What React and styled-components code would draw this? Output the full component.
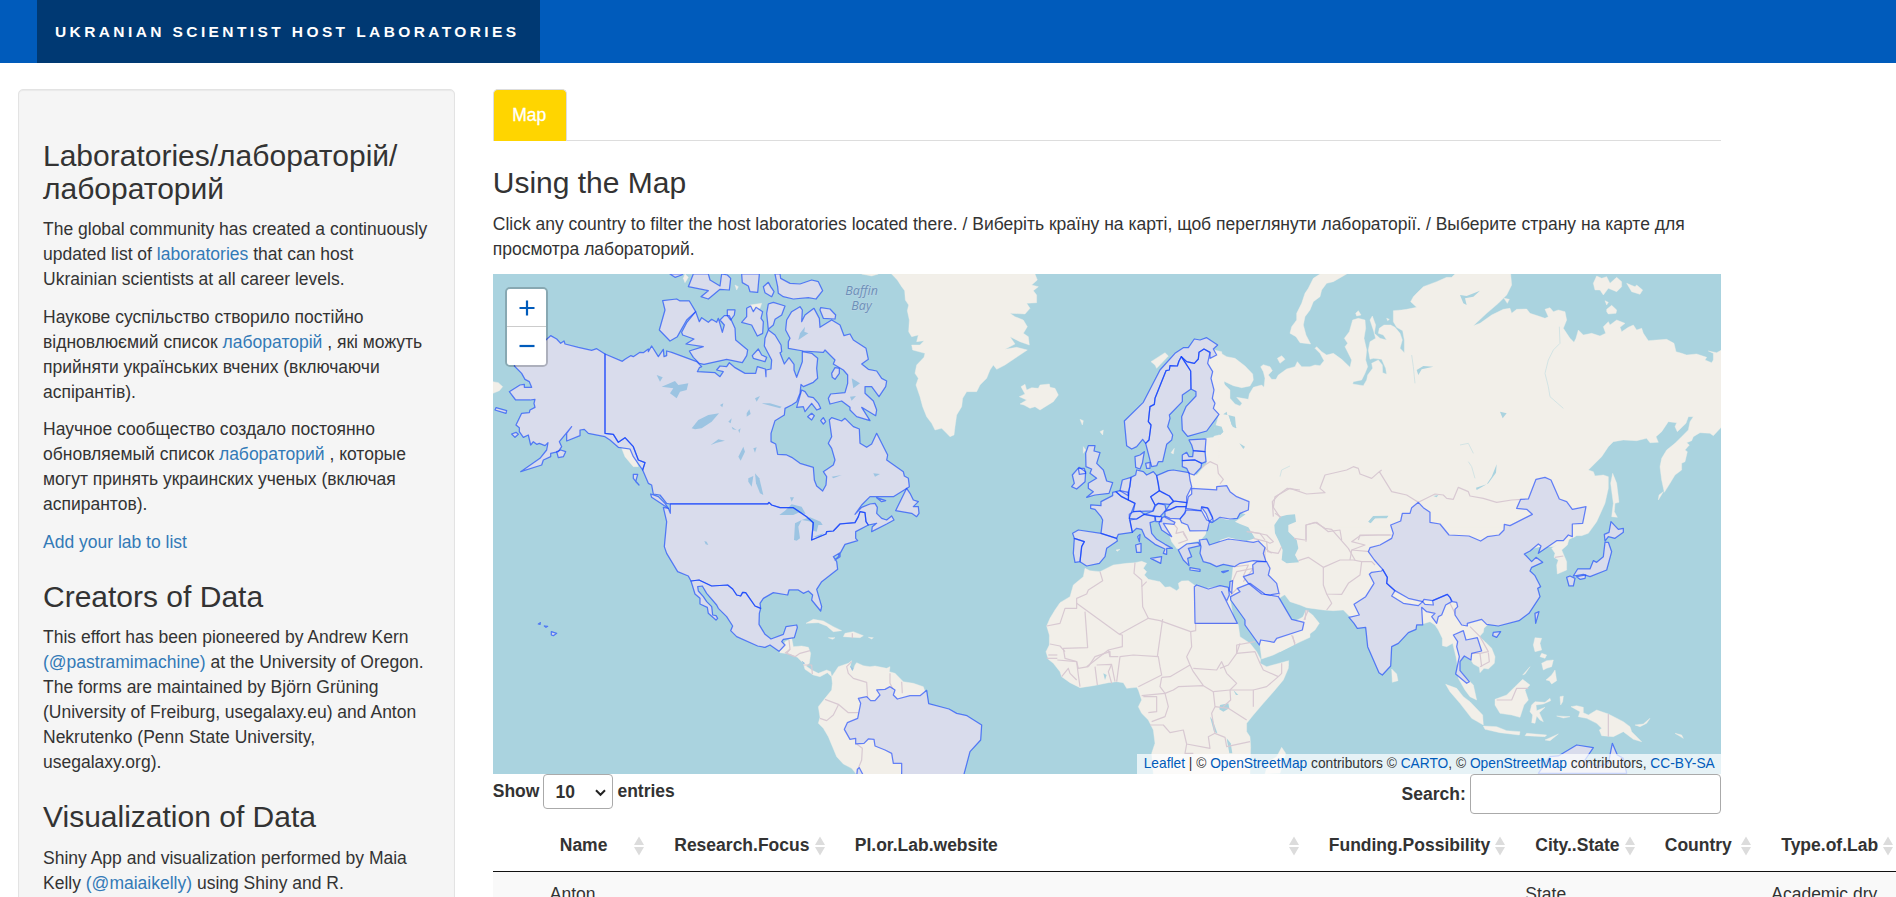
import React from "react";
import styled, { createGlobalStyle } from "styled-components";

const GlobalStyle = createGlobalStyle`
  *, *::before, *::after { box-sizing: border-box; }
  html, body { margin: 0; height: 897px; overflow: hidden; background: #fff; }
  body {
    font-family: "Liberation Sans", Arial, sans-serif;
    font-size: 17.5px;
    line-height: 25px;
    color: #333;
  }
`;

const Page = styled.div`
  width: 1896px;
  height: 897px;
  overflow: hidden;
`;
const Navbar = styled.header`
  display: flex;
  height: 63px;
  padding-left: 37px;
  margin-bottom: 26px;
  background: #005bbb;
`;
const Brand = styled.div`
  width: 503px;
  padding-left: 18px;
  background: #003973;
  color: #fff;
  font-size: 15.5px;
  font-weight: bold;
  letter-spacing: 3.4px;
  line-height: 63px;
  white-space: nowrap;
`;
const Layout = styled.div`
  display: flex;
  align-items: flex-start;
  padding-left: 18px;
`;
const Sidebar = styled.aside`
  flex: none;
  width: 437px;
  height: 900px;
  margin-right: 37.75px;
  padding: 23.75px 24px;
  background: #f5f5f5;
  border: 1px solid #e3e3e3;
  border-radius: 5px;
  box-shadow: inset 0 1px 1px rgba(0, 0, 0, 0.05);
`;
const Main = styled.main`
  flex: none;
  width: 1228px;
`;
const Heading = styled.h3`
  margin: 25px 0 12.5px;
  font-size: 30px;
  font-weight: 400;
  line-height: 33px;
`;
const Text = styled.p`
  margin: 0 0 12.5px;
`;
const Link = styled.a`
  color: #337ab7;
`;
const Tabs = styled.nav`
  display: flex;
  height: 52px;
  border-bottom: 1px solid #ddd;
`;
const Tab = styled.div`
  width: 74px;
  height: 52px;
  padding-right: 1px;
  border: 1px solid #ddd;
  border-bottom: 0;
  border-radius: 5px 5px 0 0;
  background: #ffd500;
  color: #fff;
  -webkit-text-stroke: 0.3px #fff;
  line-height: 50px;
  text-align: center;
`;
const MapFrame = styled.div`
  position: relative;
  height: 500px;
  background: #aad3df;
  overflow: hidden;
  svg { display: block; }
`;
const ZoomControl = styled.div`
  position: absolute;
  left: 12.5px;
  top: 13px;
  width: 42.5px;
  height: 80px;
  border: 2.5px solid rgba(0, 0, 0, 0.2);
  border-radius: 5px;
  background-clip: padding-box;
`;
const ZoomButton = styled.div`
  display: flex;
  align-items: center;
  justify-content: center;
  height: 38px;
  background: #fff;
  border-radius: ${(p) => (p.$last ? "0 0 3px 3px" : "3px 3px 0 0")};
  border-bottom: ${(p) => (p.$last ? "0" : "1px solid #ccc")};
`;
const Attribution = styled.div`
  position: absolute;
  right: 0;
  bottom: 0;
  width: 584px;
  height: 20px;
  padding-right: 6px;
  background: rgba(255, 255, 255, 0.7);
  font-size: 13.75px;
  line-height: 19px;
  text-align: right;
  white-space: nowrap;
`;
const MapLink = styled.a`
  color: #005bbb;
`;
const Controls = styled.div`
  display: flex;
  justify-content: space-between;
  align-items: flex-start;
  height: 49px;
  font-weight: bold;
`;
const Control = styled.label`
  display: flex;
  align-items: center;
  height: ${(p) => p.$height}px;
  gap: 4px;
`;
const Select = styled.div`
  display: flex;
  align-items: center;
  justify-content: space-between;
  width: 70px;
  height: 35px;
  padding: 2px 6px 0 11px;
  border: 1px solid #aaa;
  border-radius: 4px;
`;
const SearchInput = styled.div`
  width: 251px;
  height: 40px;
  border: 1px solid #aaa;
  border-radius: 4px;
`;
const Row = styled.div`
  display: grid;
  grid-template-columns: 47.5px 114.5px 180.5px 474px 206.5px 129.5px 116.5px 142px;
  width: 1411px;
`;
const HeadRow = styled(Row)`
  height: 49px;
  border-bottom: 1px solid #111;
  font-weight: bold;
`;
const BodyRow = styled(Row)`
  height: 60px;
  padding-top: 10px;
  background: #f9f9f9;
`;
const HeadCell = styled.div`
  display: flex;
  justify-content: space-between;
  align-items: center;
  height: 45px;
  padding: 0 10.5px 0 19.5px;
  white-space: nowrap;
`;
const Cell = styled.div`
  padding-left: 9.5px;
`;

const Sort = () => (
  <svg width="10" height="20" viewBox="0 0 10 20" fill="#dcdcdc">
    <path d="M5 0.5 L10 9 H0 Z M0 11 H10 L5 19.5 Z" />
  </svg>
);

/* Map geometry. Every region has its own origin and is drawn at three units per pixel. */
const AMERICA = [490, 270];
const SOUTH = [490, 490];
const EUROPE = [1040, 320];
const AFRICA = [1020, 540];
const RUSSIA = [1220, 270];
const ASIA = [1280, 470];

const land = [
  [AMERICA, [
    "1205,12 1222,30 1235,50 1244,62 1246,90 1256,105 1252,122 1258,150 1256,185 1265,200 1285,195 1280,215 1302,212 1290,225 1265,225 1268,240 1305,250 1302,262 1280,285 1275,310 1285,325 1278,345 1290,380 1298,410 1310,440 1325,460 1335,480 1355,475 1370,490 1380,500 1392,495 1395,470 1400,435 1415,410 1418,385 1430,365 1460,365 1470,345 1490,325 1500,300 1510,285 1520,298 1545,285 1612,240 1580,232 1545,238 1575,222 1560,200 1590,215 1618,225 1615,200 1600,190 1612,170 1600,150 1575,140 1560,130 1605,132 1620,115 1610,100 1640,98 1640,75 1630,62 1645,50 1625,45 1642,30 1635,12",
    "9,335 25,338 38,350 28,362 9,370", "1115,12 1145,18 1165,12", "585,12 595,22 585,38 580,25", "735,45 745,50 740,60",
    "395,535 425,540 445,590 430,590 405,560", "780,105 815,100 810,115 785,120",
  ]],
  [SOUTH, [
    "868,485 880,470 885,455 905,445 910,470 935,468 955,472 962,490 958,520 948,528 965,540 985,550 1010,540 1022,545 1025,560 1012,548 990,560 970,555 945,538 940,520 922,502 900,492 870,488",
    "1025,560 1045,530 1075,520 1085,512 1080,530 1090,540 1095,525 1100,518 1120,527 1140,530 1155,528 1190,535 1200,530 1198,545 1215,550 1240,575 1270,580 1300,590 1310,620 1230,860 1105,860 1085,835 1060,822 1040,800 1015,740 1000,715 985,700 990,682 985,650 1005,625 1025,600 1027,580",
    "948,400 970,388 1000,393 1030,410 1055,422 1030,425 1010,408 985,398", "1065,430 1090,425 1120,437 1110,443 1060,440", "1015,443 1035,443 1028,448", "1135,442 1150,443 1145,447",
  ]],
  [EUROPE, [
    "-57,200 -45,193 -40,210 -25,203 -5,205 0,195 28,192 30,202 45,205 55,225 40,245 0,270 -15,260 -30,265 -48,255 -60,252 -40,240 -62,230 -45,222",
    "500,85 545,95 570,400 570,600 500,640 480,662 440,670 425,690 410,685 405,655 365,615 380,590 445,500 445,452 470,465 500,430 495,355 560,340 525,325 537,283 520,265 525,250 517,235 522,210 513,175 518,155 503,130",
    "560,640 600,605 640,640 720,660 700,735 585,745 580,700 660,700 655,663 640,655", "137,390 130,400 130,380", "333,125 375,98 385,108 350,145 345,135", "120,298 130,302 127,315",
    "180,335 190,330 188,345", "393,398 403,385 400,402", "228,690 240,688 232,694", "380,620 410,650 410,685 395,665",
  ]],
  [AFRICA, [
    "195,85 210,92 240,95 280,75 320,70 345,68 365,64 380,70 370,85 380,95 373,105 385,118 420,125 435,142 450,140 470,152 478,145 475,130 485,123 505,122 527,138 560,145 600,138 622,145 630,175 640,230 655,255 660,290 690,310 710,335 722,358 720,370 740,380 770,372 806,362 805,385 790,420 765,450 730,490 700,525 680,550 680,575 690,590 692,620 690,702 400,702 395,640 405,610 400,570 385,540 365,520 355,500 365,480 355,450 350,442 320,445 310,428 290,425 265,428 220,437 180,443 150,428 125,410 120,395 100,370 85,358 78,335 88,315 88,285 80,258 90,235 105,210 120,188 150,170 160,135 190,110",
    "640,75 650,65 800,65 800,160 770,180 650,185 628,165 635,120", "718,300 870,220 870,292 820,315 760,345 725,357",
    "785,622 797,640 780,700 735,702 745,665 770,650",
  ]],
  [RUSSIA, [
    "-5,245 20,260 45,265 75,288 98,312 100,330 90,348 65,353 40,347 15,335 -5,325 15,345 30,360 30,385 45,402 60,408 66,400 50,382 85,388 88,372 100,352 125,345 132,352 135,325 130,305 122,290 130,284 150,290 157,302 145,315 155,328 168,328 175,315 200,297 225,290 232,275 245,290 270,290 285,285 300,287 312,272 300,250 285,235 290,230 305,245 320,255 340,250 365,268 390,292 395,270 375,230 383,220 373,205 388,185 398,150 415,145 435,150 437,175 432,205 440,240 437,270 443,290 435,310 425,330 400,335 398,342 430,347 440,330 443,315 458,295 455,280 475,270 487,285 488,308 500,313 497,295 485,268 460,265 450,268 445,240 450,215 467,205 460,180 450,150 457,138 467,165 463,190 480,205 500,210 490,195 475,190 478,175 492,165 512,165 525,172 540,190 547,210 540,235 553,248 553,210 548,182 530,172 520,155 520,122 545,120 560,118 590,112 572,95 580,80 590,70 610,50 650,35 680,22 695,22 705,12 872,12 875,45 860,75 835,100 800,130 760,167 780,160 815,135 850,118 870,115 875,130 890,118 920,117 930,130 955,138 975,145 985,140 975,118 990,113 1000,125 1015,120 1035,125 1040,150 1030,175 1050,205 1062,217 1068,205 1075,180 1090,195 1115,190 1140,198 1157,190 1150,170 1165,155 1170,165 1190,150 1215,160 1200,172 1205,185 1225,172 1240,165 1250,180 1265,175 1270,190 1285,212 1310,210 1340,208 1362,220 1368,245 1385,250 1400,255 1430,252 1460,262 1455,270 1475,278 1480,270 1480,250 1465,243 1490,248 1505,240 1505,470 1480,497 1470,490 1440,488 1420,500 1415,512 1400,518 1408,525 1395,540 1402,545 1395,575 1385,580 1385,600 1365,615 1350,640 1333,667 1325,630 1320,590 1325,565 1340,540 1365,520 1385,500 1405,480 1410,455 1420,440 1405,440 1398,460 1372,485 1365,470 1370,458 1345,455 1325,485 1308,500 1315,517 1290,518 1280,505 1250,512 1210,510 1180,515 1165,530 1145,560 1105,600 1120,605 1125,618 1150,615 1165,620 1165,655 1155,700 1130,755 1105,790 1085,797 1070,797 1000,830 0,830",
    "380,12 340,35 320,40 305,60 300,80 280,95 270,120 255,140 250,165 258,195 272,222 240,218 228,200 210,190 215,170 230,150 230,130 245,100 255,70 265,55 280,25 300,12",
    "1178,610 1190,640 1197,697 1185,700 1183,725 1192,742 1175,740 1180,700 1172,640", "1125,60 1120,40 1130,18 1145,25 1160,20 1170,40 1190,22 1205,35 1205,50 1190,65 1165,55 1150,75 1140,60",
    "1220,40 1245,50 1250,45 1268,60 1260,73 1235,65", "1160,118 1175,106 1190,120 1188,130 1165,132 1160,125", "1155,92 1165,97 1160,105", "407,130 415,122 423,135 410,138", "172,265 185,257 195,268 180,280", "500,145 508,148 503,152", "852,85 868,88 862,100",
    "1317,675 1330,665 1315,690",
  ]],
  [ASIA, [
    "-135,170 880,170 885,200 850,212 700,250 740,300 740,400 655,465 625,462 612,475 610,487 598,500 615,515 635,535 645,560 643,580 625,597 612,595 600,608 598,592 580,582 573,570 553,558 540,575 540,602 570,635 580,645 590,690 570,680 555,660 535,625 533,590 528,560 518,520 500,530 487,527 487,505 475,480 465,465 450,455 425,463 385,440 210,440 190,420 160,422 130,420 80,413 60,405 30,395 15,375 -5,362 -20,360 -140,360",
    "890,150 905,170 890,195 870,193", "815,235 840,218 868,205 862,225 845,240 860,275 860,300 832,312 830,285 835,270 822,262 825,250",
    "335,597 350,612 354,632 337,637", "765,503 785,505 780,520 785,540 765,545 760,525", "780,560 785,550 800,555 795,565", "785,580 800,572 820,570 815,590 800,595 790,600", "798,630 815,615 825,600 830,632 815,642 808,632",
    "497,643 530,655 550,680 570,695 608,735 610,765 575,745 540,700 510,665", "610,768 650,770 680,782 720,785 718,795 660,788 615,778", "740,790 800,795 795,800 735,797", "795,810 835,792 810,812",
    "645,688 680,675 705,650 728,628 750,645 735,660 745,690 732,705 720,742 695,735 660,730 645,705", "755,705 765,695 795,697 810,685 812,692 790,702 768,705 770,722 795,712 778,728 790,755 780,750 770,738 765,760 755,758 758,735 750,725",
    "873,710 890,707 910,712 910,728 925,735 950,720 985,732 1030,755 1050,770 1055,785 1085,815 1060,808 1030,785 1000,800 965,797 958,780 965,775 950,760 920,745 895,740 900,725", "1065,765 1090,762 1110,745 1100,760 1080,770",
    "840,680 850,678 848,695 842,705", "830,738 870,740 850,744", "728,615 750,590 735,612", "78,420 98,435 118,460 105,480 85,495 40,525 0,545 -10,500 40,460 65,450", "0,585 20,575 25,585 0,640", "1185,790 1205,795 1210,805",
  ]],
];

const selected = [
  [AMERICA, [
    "345,252 397,274 405,268 422,257 430,260 450,247 460,248 475,237 475,245 485,228 505,260 520,238 522,260 530,257 530,243 545,247 620,275 635,290 628,293 622,305 675,308 690,320 700,305 680,300 690,288 710,290 718,278 735,293 765,310 797,310 802,290 826,297 828,320 828,300 843,297 845,270 823,228 825,205 835,180 855,195 873,225 875,245 870,248 883,282 897,263 912,283 912,300 920,322 937,275 937,245 965,250 983,265 980,295 983,325 970,337 940,350 933,343 930,370 920,395 905,405 885,415 883,435 855,452 843,490 843,515 857,522 863,553 890,555 905,562 930,580 970,592 973,630 980,648 998,663 1008,645 1010,620 1000,605 1030,585 1035,570 1025,535 1015,520 1025,500 1018,450 1025,443 1055,453 1065,445 1090,470 1108,477 1110,520 1130,532 1145,522 1160,490 1193,555 1190,570 1240,605 1243,618 1255,625 1258,650 1210,680 1140,680 1115,705 1095,733 1115,712 1140,702 1155,700 1162,712 1160,730 1175,745 1190,750 1205,738 1212,750 1190,762 1145,785 1147,770 1160,760 1135,765 1128,755 1125,728 1110,725 1105,740 1095,758 1050,762 1030,783 1010,785 1008,792 965,810 970,758 950,740 910,713 870,713 845,705 837,697 833,702 541,702 530,700 510,675 490,672 485,645 475,640 458,600 465,578 445,570 430,530 405,503 385,517 370,493 345,490",
    "345,252 320,236 305,241 265,232 225,222 222,213 212,220 200,207 182,197 165,212 130,240 80,270 73,288 95,310 105,328 118,335 125,352 103,352 103,343 90,345 58,365 77,390 120,390 135,388 132,400 135,412 120,420 118,428 95,430 78,465 88,473 88,485 100,502 115,495 122,525 130,515 140,523 148,520 165,527 174,518 170,540 150,565 135,575 92,605 155,585 160,570 182,560 182,550 205,545 215,530 208,515 245,470 230,490 230,513 270,497 270,480 283,478 295,490 345,500 360,510 385,532 420,537 430,560 458,600 465,578 445,570 430,530 405,503 385,517 370,493 345,490",
    "518,92 560,87 570,93 598,93 617,125 590,150 572,182 562,200 540,213 508,180 525,120", "617,125 628,155 635,143 655,157 665,148 680,157 685,145 697,187 703,165 690,150 703,137 718,137 735,175 737,210 773,240 770,257 757,278 710,268 642,283 628,280 610,262 598,243 640,230 588,222 612,207 578,195 575,187 590,158", "712,120 735,120 733,135 722,150 712,137",
    "770,115 782,108 790,125 798,112 818,125 813,145 820,155 818,190 802,198 785,165 755,157 770,140", "835,102 850,97 885,108 875,135 855,148 850,165 835,178 830,130", "787,257 805,237 815,255 830,262 825,275 790,265",
    "595,50 610,12 655,12 660,30 690,48 695,12 712,15 722,25 718,60 690,58 655,87 633,80 655,62", "755,12 808,12 803,67 780,65 775,48 757,38", "820,50 835,37 842,50 852,65 845,80 825,68", "855,12 863,50 865,70 880,80 910,87 955,83 978,87 998,62 985,35 965,30 930,42 900,40 872,25 870,12", "540,12 555,22 575,15 578,12",
    "895,235 895,215 900,205 887,180 890,150 905,125 930,110 937,120 935,155 945,135 972,115 988,145 990,172 1025,150 1050,165 1062,197 1080,192 1090,210 1128,235 1135,268 1115,282 1135,298 1160,303 1175,325 1190,333 1187,350 1167,380 1145,350 1125,350 1125,370 1150,393 1160,420 1157,437 1115,412 1140,452 1100,440 1080,420 1080,412 1055,393 1020,402 1015,385 1022,372 1065,368 1073,340 1073,315 1060,300 1030,282 1035,270 1005,240 1000,247 940,243",
    "990,120 992,113 1020,117 1037,135 1035,147 1000,145", "935,360 945,365 955,380 970,383 985,400 992,415 980,420 965,400 945,425 940,410 920,412", "1025,310 1035,293 1048,295 1048,310 1035,328 1027,322", "953,440 965,430 973,437 965,450", "992,452 1000,443 1007,455 1000,462",
    "1250,655 1260,670 1270,690 1285,695 1270,710 1285,710 1287,730 1280,740 1265,730 1217,722", "482,672 505,680 525,700 535,715 485,682", "430,613 443,613 437,635 447,645 430,625", "1160,683 1187,692 1175,695", "200,545 212,540 227,545 220,560 205,563", "15,420 18,413 50,422 48,430", "65,492 78,487 85,493 75,502",
  ]],
  [SOUTH, [
    "541,42 541,70 535,55 520,52 530,95 523,170 530,190 563,245 595,258 603,273 627,270 665,288 713,285 728,297 740,315 752,318 758,307 767,308 795,348 812,355 810,340 820,325 850,308 893,315 897,300 925,300 940,310 955,303 968,315 965,330 992,363 995,350 980,298 995,275 1043,238 1040,215 1030,200 1050,188 1050,200 1035,210 1045,200 1065,163 1103,152 1097,145 1097,125 1135,105 1128,95 1125,68 1110,65 1105,80 1095,98 1050,102 1030,123 1010,125 1008,132 965,150 970,98 950,80 910,53 870,53 845,45 837,37 833,42",
    "603,273 627,270 665,288 713,285 728,297 740,315 752,318 758,307 767,308 795,348 812,355 808,370 807,403 825,433 843,447 880,433 888,410 920,405 922,412 913,443 880,448 875,455 885,465 867,484 840,465 825,472 803,468 740,440 722,422 728,408 710,380 685,355 680,345 650,310 637,288 623,290 625,303 640,320 650,335 665,350 668,375 678,377 683,385 678,390 655,370 652,352 630,342 630,325 615,312",
    "1310,601 1316,641 1377,657 1400,670 1431,677 1475,705 1472,750 1440,785 1420,860 1235,860 1235,820 1210,820 1205,790 1185,780 1155,768 1152,748 1135,747 1122,760 1097,762 1097,745 1080,748 1063,718 1072,698 1103,685 1112,640 1105,625 1130,620 1142,632 1155,632 1170,615 1160,600 1185,598 1200,590 1215,600 1210,615 1222,627 1260,617 1290,617",
    "1100,860 1102,838 1108,833 1122,860", "184,425 200,430 190,437 184,435", "163,408 173,409 168,412", "145,402 151,398 150,403",
  ]],
  [EUROPE, [
    "500,53 533,75 520,87 530,105 510,115 510,97 492,87 477,97 475,117 463,130 440,125 424,110 417,123 412,138 390,137 388,150 378,152 345,235 343,253 330,260 325,305 333,315 327,360 317,370 308,358 290,380 275,387 260,377 253,303 310,247 360,150 405,100 430,83 445,83 463,57 480,60",
    "424,110 452,153 453,207 427,225 427,245 388,285 390,295 383,320 398,345 395,360 380,373 368,425 355,425 350,437 335,440 317,370 327,360 333,315 325,305 330,260 343,253 345,235 378,152 388,150 390,137 412,138 417,123",
    "424,110 440,125 463,130 475,117 477,97 492,87 510,97 503,130 518,155 513,175 522,210 517,235 525,250 520,265 537,283 500,333 443,349 427,330 425,290 438,260 468,228 468,215 453,207 452,153",
    "285,410 300,405 313,395 307,430 300,447 287,442", "317,430 330,427 330,445 320,445", "447,360 498,357 495,395 460,392 455,375", "458,410 460,392 495,395 498,425 485,430 465,420 427,422 427,405 440,397 447,410", "427,422 465,420 485,430 483,442 462,465 447,460 440,445 427,440",
    "350,467 385,452 400,450 447,458 450,480 455,500 440,530 440,548 400,543 388,528 368,518 358,512 355,490", "287,465 290,450 310,455 320,465 340,455 350,467 358,512 332,530 345,555 338,573 280,575 285,550 265,540 268,505 273,472",
    "247,480 273,472 270,500 265,515 265,527 240,512", "228,515 240,512 265,517 265,540 245,530", "228,515 245,530 285,550 275,575 268,595 277,637 235,643 230,655 183,640 188,600 183,590 165,568 152,565 152,555 183,557 183,545 218,527 218,517",
    "280,575 300,573 313,583 290,597 268,595 268,583", "313,583 340,573 345,560 355,550 375,555 378,570 360,590", "332,530 358,512 388,528 400,543 390,553 355,550 345,555", "378,570 390,553 405,543 440,548 438,560 410,560 390,570", "375,575 410,560 438,560 435,580 420,597 390,595 375,588",
    "277,637 270,600 290,597 313,583 345,590 345,603 330,608 335,640 350,658 375,673 397,685 380,685 380,703 370,700 375,687 345,673 315,650 305,628 290,625", "332,715 365,710 362,730", "287,675 303,670 303,697 290,697", "293,650 300,643 298,665", "345,590 365,590 365,605 348,605", "365,595 372,590 405,607 402,613 370,610 395,650 365,630 357,610",
    "420,597 440,570 485,573 500,600 518,607 508,608 502,632 450,633 443,615 425,608", "485,562 502,563 518,595 508,605 498,580", "455,505 530,510 530,500 560,497 570,515 590,530 627,545 625,570 600,580 592,595 570,597 540,592 520,605 517,590 505,565 485,560 483,572 438,565 445,530 455,522",
    "103,655 133,665 125,680 120,725 105,727 100,700", "98,640 115,630 183,640 230,655 232,663 200,685 195,710 178,730 140,738 120,725 125,680 133,665 103,655",
    "145,377 165,377 162,393 180,398 170,430 190,450 200,483 218,488 207,520 165,525 140,532 160,515 145,505 145,490 170,475 150,460 155,447 138,440 137,400", "97,465 117,442 137,455 135,485 110,507 95,500 103,490", "115,445 133,445 137,460 118,463",
    "415,690 440,672 475,668 480,677 445,685 455,710 443,715 447,737 430,720", "450,743 480,748 480,754 450,750", "545,755 565,752 550,758", "478,660 500,657 508,675 545,663 565,657 590,660 640,667 655,663 675,683 670,700 678,725 640,722 600,730 583,740 550,733 530,740 510,730 490,725 480,700 483,680",
    "638,735 650,725 680,725 690,745 685,765 710,790 717,820 690,825 665,822 625,790 610,770 640,760", "570,785 578,782 575,820 568,812",
  ]],
  [AFRICA, [
    "632,170 660,155 652,145 690,130 735,163 775,170 815,238 852,247 847,270 770,295 762,307 722,300 718,315 675,255 675,240 632,180", "523,140 530,135 565,147 600,137 625,142 628,165 620,183 605,155 652,250 525,250",
  ]],
  [ASIA, [
    "415,97 430,113 450,127 450,157 480,162 507,195 567,198 602,213 622,200 657,195 672,180 673,163 690,167 757,133 740,118 710,115 722,88 745,87 768,28 795,22 813,30 838,87 860,95 877,118 918,110 908,160 877,162 877,200 865,195 850,212 830,212 775,250 783,228 775,222 750,243 733,252 755,275 768,262 788,277 755,292 750,303 765,317 782,350 773,355 780,380 747,430 717,452 655,468 620,463 605,448 562,460 562,468 545,465 525,435 525,418 533,410 530,397 517,395 510,382 502,373 458,392 432,388 428,395 385,385 345,362 320,340 322,322 308,298 283,270 265,245 270,233 300,225 335,205 340,190 332,165 362,153 367,130 390,130 395,113",
    "308,298 322,322 320,340 345,362 335,378 370,400 415,407 428,395 435,403 460,405 458,392 502,373 510,382 515,395 497,405 485,435 475,440 470,460 455,440 465,430 440,425 425,412 428,465 410,465 408,478 385,488 355,520 335,530 332,588 307,615 297,608 263,530 257,472 232,475 222,460 207,442 238,435 222,403 257,380 282,340 268,313 275,307 305,303",
    "520,495 550,482 558,510 592,503 605,543 575,550 573,570 553,558 540,575 540,602 568,635 560,640 527,612 538,560 530,530 533,515", "993,155 1015,178 1030,175 1030,187 1005,205 985,200 975,213 973,193 987,187", "975,217 985,217 995,245 980,300 930,320 910,313 880,318 893,297 930,297 940,272 950,277 970,260", "860,322 870,318 885,325 880,348 867,348", "890,320 917,315 915,325 900,328", "765,430 777,425 767,460", "640,487 662,485 650,502 638,497",
    "775,910 810,860 835,858 890,825 940,833 915,870 955,890 985,880 997,820 1012,855 1030,865 1040,910",
  ]],
];

const lakes = [
  [AMERICA, [
    "515,350 555,333 565,345 595,340 590,360 570,365 560,385 540,370 550,355", "605,475 625,450 655,435 687,430 665,455 635,475 615,478", "662,525 685,508 705,512 680,518", "775,625 790,618 785,650 775,635", "795,610 808,625 820,675 810,670 798,640", "745,560 760,530 765,545 752,572", "770,430 778,418 782,432 770,440", "790,535 800,532 795,548", "500,315 518,322 510,335", "900,682 912,682 905,695", "1085,325 1110,340 1090,355", "1150,610 1170,612 1155,620",
    "1025,620 1055,615 1030,625", "795,385 810,378 800,395", "715,455 725,445 722,460", "725,470 740,480 728,478", "745,480 752,475 748,490", "690,405 700,400 697,412", "815,400 870,415 875,410 840,400", "1080,380 1098,378 1085,392", "930,190 945,170 943,185 955,190 925,210",
  ]],
  [SOUTH, [
    "868,75 885,62 905,43 935,50 947,72 925,68 910,75", "912,150 915,100 935,90 925,110 930,145 920,152", "935,90 960,82 992,95 998,105 985,105 980,125 970,122 965,95", "970,140 1000,130 990,140", "643,153 650,155 655,165 647,163", "1080,528 1090,535 1087,543", "1105,810 1113,818", "935,512 945,520 940,522",
  ]],
  [EUROPE, [
    "518,600 540,595 565,600 578,598 590,575 617,583 585,605 600,612 625,622 645,655 620,663 590,658 565,652 540,660 510,670 495,652 500,630", "703,615 720,590 740,585 765,583 768,605 745,615 745,635 770,660 775,685 765,705 777,727 740,730 725,720 728,690 715,660 705,640", "525,315 545,320 550,335 540,345 525,338", "568,290 582,305 590,325 575,315", "335,370 345,358 350,368 340,380", "360,370 370,360 368,375", "540,545 550,548 555,557", "550,283 560,275 562,285",
    "445,352 500,342 525,340 520,352 495,354",
  ]],
  [AFRICA, ["600,495 625,490 628,505 610,515 598,508", "570,530 578,540 592,580 582,575", "620,595 632,610 637,640 628,640", "640,450 655,465 648,465", "250,400 260,405 255,420"]],
  [RUSSIA, ["830,583 828,608 805,640 770,660 768,653 800,643 815,620", "720,75 740,78 780,62 760,80 735,85 740,105 730,100", "25,435 45,440 48,475 38,470", "0,470 10,485 0,495", "58,520 75,530 70,537", "445,755 460,738 505,738 500,745 465,745 452,758", "590,300 610,288 640,290 605,298 595,315", "640,678 655,675 650,682", "840,425 860,430 848,445"]],
  [ASIA, ["265,155 280,138 325,137 320,143 285,145 272,160", "540,272 553,278 550,284", "425,342 438,348", "405,206 413,209", "720,375 728,380", "730,95 740,98 725,105"]],
];

const borders = [
  [SOUTH, ["897,450 900,478 890,490 915,500 930,490 960,482", "900,478 885,490", "940,525 965,525 967,552", "1087,430 1087,445", "1085,515 1070,530 1075,550 1090,565 1130,577 1133,625", "1200,550 1200,580 1210,600", "1235,575 1237,610", "1005,628 1045,643 1075,668 1105,668", "1045,645 1030,675 1010,692 990,685", "1100,762 1117,775 1115,810 1105,835"]],
  [EUROPE, ["484,445 495,435 510,425 532,435 535,460 550,478 540,492", "400,610 412,625 408,640 430,635 443,660 415,670", "430,640 440,655", "630,635 680,645 700,665 690,670 680,665 640,655", "680,665 683,695 715,700 725,680", "675,685 695,700", "610,768 625,735 585,740", "700,590 697,545 715,525 742,505 780,510", "723,592 705,580"]],
  [AFRICA, ["240,95 248,122 205,150 200,162 170,175 170,205 135,205 120,250 80,258", "170,190 298,283 385,235 420,242 512,275 527,272 527,250", "345,68 342,100 365,120 368,200 385,235", "380,125 365,140", "298,283 307,285 307,320 265,330 200,380", "195,215 203,323 130,325 135,355 170,365 175,385 205,380", "90,312 120,318 135,335", "85,345 112,345", "80,355 112,355", "112,360 170,365 175,405 180,440", "125,410 145,385 150,400 170,420", "225,380 232,435", "205,380 225,350 270,335 270,350 295,350", "230,375 275,373 265,395 275,430", "265,330 270,350", "275,375 285,425", "290,425 300,350 340,345 415,350 420,380 425,405 355,440", "428,237 412,350", "512,275 515,320 500,350 510,375 450,410 425,412", "425,412 420,440 435,460 365,467", "435,460 460,450 475,440 550,437 580,455 630,450 700,450", "510,375 520,395 550,437", "520,385 590,390 605,365 620,400 650,430 630,450", "600,385 625,375 650,340 660,310", "650,340 705,335 720,370 730,390 775,410 740,440 700,450 700,500", "785,370 785,400 775,410", "530,250 650,250", "580,455 585,500 575,520 585,580 565,590 570,625 500,612 490,570 450,578 430,555 390,555", "435,460 445,500 435,530 395,545", "370,470 410,470 410,515 385,518", "585,500 625,505 680,540", "630,450 632,480 610,500", "585,580 615,592 620,620 690,605", "500,612 495,640 520,640", "705,305 650,315 650,340", "635,130 650,95 700,85 670,125", "652,145 632,165", "818,288 825,315", "855,240 858,210", "735,68 735,20", "775,170 780,160"]],
  [RUSSIA, ["180,742 160,712 165,680 210,655 260,672 315,668 300,655 315,615 380,600 400,590 415,595 420,612 455,625 478,605 515,665 560,675 595,697 645,672 670,675 680,685 700,688 715,652 745,665 750,678 790,685 830,697 875,690 905,688", "258,810 258,765 290,757 325,785 360,780 365,810", "80,785 120,790 135,810", "415,810 420,795 510,795", "478,605 485,600"]],
  [ASIA, ["78,215 78,165 105,157 135,175 155,178 205,235 225,270", "55,272 85,262 130,292 180,270 220,270 245,275 275,275 285,285", "335,195 295,195 240,197 215,215 255,225 215,240 210,270", "215,240 270,245", "130,292 130,345 140,372 185,373 205,340 240,315 245,275", "140,372 155,400 140,420", "42,205 75,210", "85,420 72,450", "570,470 600,500 625,545 600,550 605,590", "575,550 600,550", "625,548 628,575 600,590", "650,690 695,690 710,655 745,655", "985,732 985,800", "825,262 850,258", "35,495 45,520", "510,400 530,440"]],
];

const rivers = [
  [RUSSIA, ["1018,170 1020,220 1000,240 985,270 975,310 985,350 990,380 1030,415", "180,620 185,600 210,588", "720,525 745,520 760,550", "745,575 755,590 765,625", "575,255 580,290 585,340"]],
  [AMERICA, ["420,310 450,325 475,355", "740,640 770,660", "360,465 375,480", "1110,665 1120,630"]],
  [AFRICA, ["600,250 610,230"]],
];

const Shapes = ({ data, line, ...rest }) =>
  data.map(([[x, y], list], i) => (
    <g key={i} transform={`translate(${x} ${y}) scale(0.33333)`} {...rest}>
      {list.map((points, j) =>
        line
          ? <polyline key={j} points={points} fill="none" vectorEffect="non-scaling-stroke" />
          : <polygon key={j} points={points} vectorEffect="non-scaling-stroke" />
      )}
    </g>
  ));

const WorldMap = () => (
  <svg width="1228" height="500" viewBox="493 274 1228 500">
    <Shapes data={land} fill="#f2efe9" stroke="#f2efe9" strokeWidth="0.4" strokeLinejoin="round" />
    <Shapes data={lakes} fill="#aad3df" />
    <Shapes data={rivers} line stroke="#cfe2e3" strokeWidth="0.9" />
    <Shapes data={borders} line stroke="#d8c9d2" strokeWidth="1.2" strokeLinejoin="round" />
    <Shapes data={selected} fill="#d9dcec" />
    <Shapes data={[lakes[0], lakes[1]]} fill="#9cc4e2" />
    <Shapes data={selected} fill="none" stroke="#0033ff" strokeOpacity="0.58" strokeWidth="1.25" strokeLinejoin="round" />
    <text fontFamily="Open Sans, sans-serif" fontStyle="italic" fontWeight="500" fontSize="12.5" fill="#6c90b8" stroke="#b9d6e5" strokeWidth="1.2" paintOrder="stroke" textAnchor="middle">
      <tspan x="861.5" y="295">Baffin</tspan>
      <tspan x="861.5" y="310">Bay</tspan>
    </text>
  </svg>
);

const columns = ["Name", "Research.Focus", "PI.or.Lab.website", "Funding.Possibility", "City..State", "Country", "Type.of.Lab"];

export default function App() {
  return (
    <Page>
      <GlobalStyle />
      <Navbar><Brand>UKRANIAN SCIENTIST HOST LABORATORIES</Brand></Navbar>
      <Layout>
        <Sidebar>
          <Heading>Laboratories/лабораторій/<wbr />лабораторий</Heading>
          <Text>The global community has created a continuously updated list of <Link>laboratories</Link> that can host Ukrainian scientists at all career levels.</Text>
          <Text>Наукове суспільство створило постійно відновлюємий список <Link>лабораторій</Link> , які можуть прийняти українських вчених (включаючи аспірантів).</Text>
          <Text>Научное сообщество создало постоянно обновляемый список <Link>лабораторий</Link> , которые могут принять украинских ученых (включая аспирантов).</Text>
          <Text><Link>Add your lab to list</Link></Text>
          <Heading>Creators of Data</Heading>
          <Text>This effort has been pioneered by Andrew Kern <Link>(@pastramimachine)</Link> at the University of Oregon. The forms are maintained by Björn Grüning (University of Freiburg, usegalaxy.eu) and Anton Nekrutenko (Penn State University, usegalaxy.org).</Text>
          <Heading>Visualization of Data</Heading>
          <Text>Shiny App and visualization performed by Maia Kelly <Link>(@maiaikelly)</Link> using Shiny and R.</Text>
        </Sidebar>
        <Main>
          <Tabs><Tab>Map</Tab></Tabs>
          <Heading>Using the Map</Heading>
          <Text>Click any country to filter the host laboratories located there. / Виберіть країну на карті, щоб переглянути лабораторії. / Выберите страну на карте для просмотра лабораторий.</Text>
          <MapFrame>
            <WorldMap />
            <ZoomControl>
              <ZoomButton>
                <svg width="16" height="16" viewBox="0 0 16 16" stroke="#005bbb" strokeWidth="2.2"><path d="M0.5 8H15.5M8 0.5V15.5" /></svg>
              </ZoomButton>
              <ZoomButton $last>
                <svg width="16" height="16" viewBox="0 0 16 16" stroke="#005bbb" strokeWidth="2.2"><path d="M0.5 8H15.5" /></svg>
              </ZoomButton>
            </ZoomControl>
            <Attribution>
              <MapLink>Leaflet</MapLink> | © <MapLink>OpenStreetMap</MapLink> contributors © <MapLink>CARTO</MapLink>, © <MapLink>OpenStreetMap</MapLink> contributors, <MapLink>CC-BY-SA</MapLink>
            </Attribution>
          </MapFrame>
          <Controls>
            <Control $height={35}>
              Show
              <Select>
                10
                <svg width="11" height="8" viewBox="0 0 11 8" fill="none" stroke="#222" strokeWidth="2"><path d="M1 1.2 L5.5 5.8 L10 1.2" /></svg>
              </Select>
              entries
            </Control>
            <Control $height={40}>Search:<SearchInput /></Control>
          </Controls>
          <HeadRow>
            <span />
            {columns.map((name) => <HeadCell key={name}>{name}<Sort /></HeadCell>)}
          </HeadRow>
          <BodyRow>
            <Cell /><Cell>Anton</Cell><Cell /><Cell /><Cell /><Cell>State</Cell><Cell /><Cell>Academic,dry</Cell>
          </BodyRow>
        </Main>
      </Layout>
    </Page>
  );
}
